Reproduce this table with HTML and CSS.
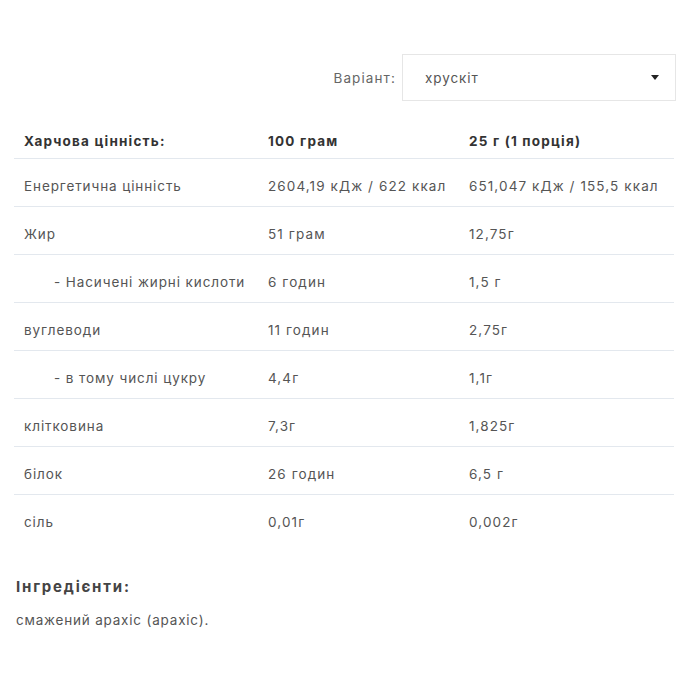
FILE: index.html
```html
<!DOCTYPE html>
<html lang="uk">
<head>
<meta charset="utf-8">
<link rel="stylesheet" href="styles.css">
</head>
<body>
<div class="page">
  <div class="variant">
    <span class="variant-label">Варіант:</span>
    <div class="select">
      <span>хрускіт</span>
      <svg class="arrow" width="8" height="5" viewBox="0 0 8 5"><path d="M0 0h8L4 5z" fill="#222"/></svg>
    </div>
  </div>
  <table class="nutri">
    <thead>
      <tr><th>Харчова цінність:</th><th>100 грам</th><th>25 г (1 порція)</th></tr>
    </thead>
    <tbody>
      <tr><td>Енергетична цінність</td><td>2604,19 кДж / 622 ккал</td><td>651,047 кДж / 155,5 ккал</td></tr>
      <tr><td>Жир</td><td>51 грам</td><td>12,75г</td></tr>
      <tr><td class="sub">- Насичені жирні кислоти</td><td>6 годин</td><td>1,5 г</td></tr>
      <tr><td>вуглеводи</td><td>11 годин</td><td>2,75г</td></tr>
      <tr><td class="sub">- в тому числі цукру</td><td>4,4г</td><td>1,1г</td></tr>
      <tr><td>клітковина</td><td>7,3г</td><td>1,825г</td></tr>
      <tr><td>білок</td><td>26 годин</td><td>6,5 г</td></tr>
      <tr class="last"><td>сіль</td><td>0,01г</td><td>0,002г</td></tr>
    </tbody>
  </table>
  <h3 class="ing-title">Інгредієнти:</h3>
  <p class="ing-text">смажений арахіс (арахіс).</p>
</div>
</body>
</html>
```

FILE: styles.css
```css
* { box-sizing: border-box; }
body {
  margin: 0;
  background: #fff;
  font-family: Inter, "Noto Sans", sans-serif;
  font-size: 13.5px;
  letter-spacing: 0.9px;
  color: #555;
}
.page {
  padding: 54px 24px 0 14px;
}
.variant {
  display: flex;
  justify-content: flex-end;
  align-items: center;
  gap: 6px;
}
.variant-label {
  color: #666;
  letter-spacing: 1.1px;
}
.select {
  width: 274px;
  height: 47px;
  border: 1px solid #e6e6e6;
  display: flex;
  align-items: center;
  justify-content: space-between;
  padding: 0 16px 0 22px;
  color: #555;
}
.nutri {
  width: 660px;
  border-collapse: collapse;
  margin-top: 20px;
  table-layout: fixed;
}
.nutri th:nth-child(1), .nutri td:nth-child(1) { width: 244px; }
.nutri th:nth-child(2), .nutri td:nth-child(2) { width: 201px; }
.nutri th {
  text-align: left;
  font-weight: 700;
  color: #333;
  letter-spacing: 1.2px;
  padding: 12px 10px 9px;
  line-height: 16px;
  border-bottom: 1px solid #e3e8ee;
}
.nutri td {
  padding: 19px 10px 12px;
  line-height: 16px;
  border-bottom: 1px solid #e3e8ee;
  white-space: nowrap;
}
.nutri td:nth-child(n+2) { letter-spacing: 1.1px; }
.nutri tr.last td { border-bottom: none; }
.nutri td.sub { padding-left: 40px; }
.ing-title {
  margin: 36px 0 0 2px;
  font-size: 15px;
  font-weight: 700;
  color: #444;
  letter-spacing: 1.8px;
  line-height: 18px;
}
.ing-text {
  margin: 16px 0 0 2px;
  line-height: 16px;
  letter-spacing: 0.8px;
  color: #555;
}
```
